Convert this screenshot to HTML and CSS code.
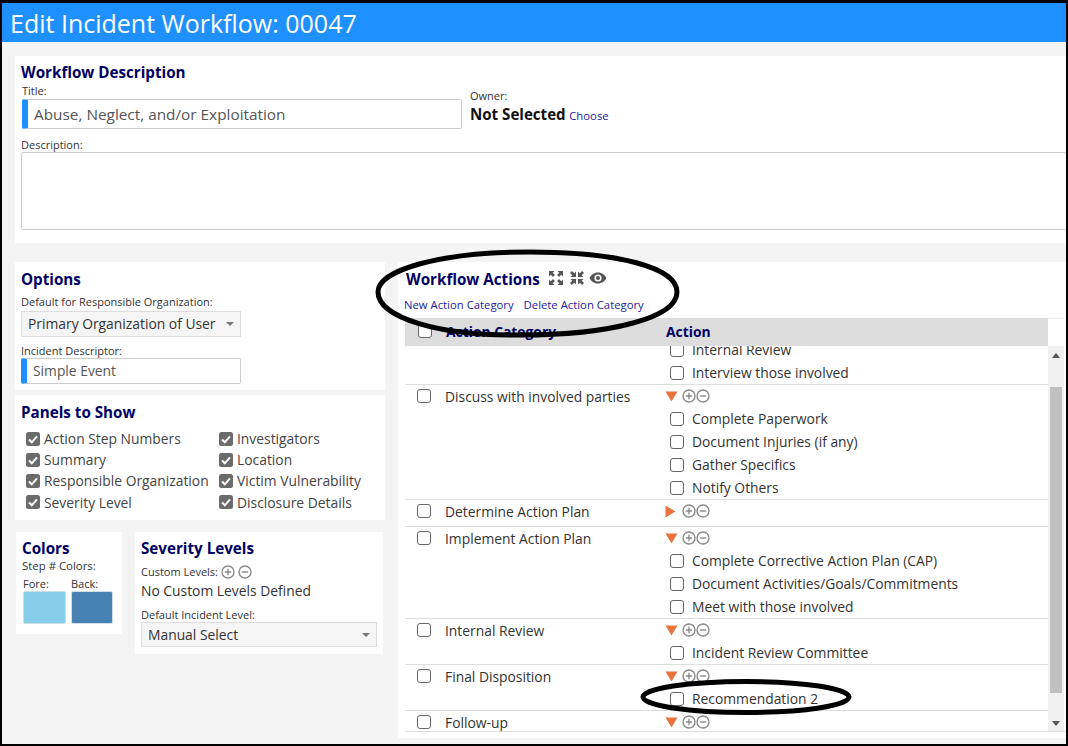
FILE: index.html
```html
<!DOCTYPE html>
<html>
    <head>
        <title>Edit Incident Workflow</title>
        <meta charset="UTF-8">
        <link rel="stylesheet" href="styles.css">
    </head>
    <body>
        <svg class="icon-defs" width="0" height="0">
            <symbol id="plus" viewBox="0 0 14 14"><circle cx="7" cy="7" r="6" fill="none" stroke="#8a8a8a" stroke-width="1.4"/><path d="M7 3.8v6.4M3.8 7h6.4" stroke="#8a8a8a" stroke-width="1.4"/></symbol>
            <symbol id="minus" viewBox="0 0 14 14"><circle cx="7" cy="7" r="6" fill="none" stroke="#8a8a8a" stroke-width="1.4"/><path d="M3.8 7h6.4" stroke="#8a8a8a" stroke-width="1.4"/></symbol>
            <symbol id="down" viewBox="0 0 13 11"><path d="M0.5 0.5h12l-6 10z" fill="#e8743b"/></symbol>
            <symbol id="right" viewBox="0 0 11 13"><path d="M0.5 0.5v12l10-6z" fill="#e8743b"/></symbol>
            <symbol id="tick" viewBox="0 0 14 14"><rect width="14" height="14" rx="2.5" fill="#6b6b6b"/><path d="M3 7.5l2.8 2.8L11 4.4" fill="none" stroke="#fff" stroke-width="2"/></symbol>
        </svg>
        <div class="frame">
            <div class="page-title">Edit Incident Workflow: 00047</div>
            <div class="main">
                <div class="panel desc-panel">
                    <h2>Workflow Description</h2>
                    <div class="desc-top">
                        <div class="title-group">
                            <div class="label">Title:</div>
                            <div class="input required title-input">Abuse, Neglect, and/or Exploitation</div>
                        </div>
                        <div class="owner-group">
                            <div class="label">Owner:</div>
                            <div class="owner-line"><b>Not Selected</b> <a class="link">Choose</a></div>
                        </div>
                    </div>
                    <div class="label desc-label">Description:</div>
                    <div class="textarea"></div>
                </div>
                <div class="columns">
                    <div class="left-col">
                        <div class="panel options-panel">
                            <h2>Options</h2>
                            <div class="label">Default for Responsible Organization:</div>
                            <div class="select org-select">Primary Organization of User<span class="caret"></span></div>
                            <div class="label descriptor-label">Incident Descriptor:</div>
                            <div class="input required descriptor-input">Simple Event</div>
                        </div>
                        <div class="panel show-panel">
                            <h2>Panels to Show</h2>
                            <div class="show-grid">
                                <div class="show-item"><svg><use href="#tick"/></svg>Action Step Numbers</div>
                                <div class="show-item"><svg><use href="#tick"/></svg>Investigators</div>
                                <div class="show-item"><svg><use href="#tick"/></svg>Summary</div>
                                <div class="show-item"><svg><use href="#tick"/></svg>Location</div>
                                <div class="show-item"><svg><use href="#tick"/></svg>Responsible Organization</div>
                                <div class="show-item"><svg><use href="#tick"/></svg>Victim Vulnerability</div>
                                <div class="show-item"><svg><use href="#tick"/></svg>Severity Level</div>
                                <div class="show-item"><svg><use href="#tick"/></svg>Disclosure Details</div>
                            </div>
                        </div>
                        <div class="bottom-row">
                            <div class="panel colors-panel">
                                <h2>Colors</h2>
                                <div class="label step-label">Step # Colors:</div>
                                <div class="swatches">
                                    <div class="swatch-col"><div class="label">Fore:</div><div class="swatch fore"></div></div>
                                    <div class="swatch-col"><div class="label">Back:</div><div class="swatch back"></div></div>
                                </div>
                            </div>
                            <div class="panel severity-panel">
                                <h2>Severity Levels</h2>
                                <div class="label custom-label">Custom Levels: <svg class="pm"><use href="#plus"/></svg> <svg class="pm"><use href="#minus"/></svg></div>
                                <div class="no-levels">No Custom Levels Defined</div>
                                <div class="label default-label">Default Incident Level:</div>
                                <div class="select level-select">Manual Select<span class="caret"></span></div>
                            </div>
                        </div>
                    </div>
                    <div class="panel actions-panel">
                        <div class="actions-head">
                            <h2>Workflow Actions</h2>
                            <svg class="tool" width="16" height="16" viewBox="0 0 16 16"><path d="M1 6.500V1H6.500L4.700 2.800 6.900 5 5 6.900 2.800 4.700zM9.500 1H15V6.500L13.200 4.700 11 6.900 9.100 5 11.300 2.800zM15 9.500V15H9.500L11.300 13.200 9.100 11 11 9.100 13.200 11.300zM6.500 15H1V9.500L2.800 11.300 5 9.100 6.900 11 4.700 13.200z" fill="#555"/></svg>
                            <svg class="tool" width="16" height="16" viewBox="0 0 16 16"><path d="M7 7H1.500L3.300 5.200 1 2.900 2.900 1 5.200 3.300 7 1.500zM9 7V1.500L10.800 3.300 13.100 1 15 2.900 12.700 5.200 14.500 7zM9 9H14.500L12.700 10.800 15 13.100 13.100 15 10.800 12.700 9 14.500zM7 9V14.500L5.200 12.700 2.900 15 1 13.100 3.300 10.800 1.500 9z" fill="#555"/></svg>
                            <svg class="tool eye" width="18" height="12" viewBox="0 0 18 12"><path d="M9 0.500C5 0.500 1.900 3 0.500 6c1.400 3 4.500 5.500 8.500 5.500s7.100-2.500 8.500-5.500C16.100 3 13 0.500 9 0.500zM9 9.600A3.600 3.600 0 1 1 9 2.400a3.600 3.600 0 0 1 0 7.200z" fill="#555"/><circle cx="9" cy="6" r="2" fill="#555"/></svg>
                        </div>
                        <div class="actions-links"><a class="link">New Action Category</a><a class="link">Delete Action Category</a></div>
                        <div class="table-head">
                            <div class="head-cells">
                                <span class="box"></span>
                                <span class="head-cat">Action Category</span>
                                <span class="head-action">Action</span>
                            </div>
                            <div class="head-corner"></div>
                        </div>
                        <div class="table-wrap">
                            <div class="table-body">
                                <div class="row scrolled">
                                    <div class="cat"></div>
                                    <div class="acts">
                                        <div class="item"><span class="box"></span>Internal Review</div>
                                        <div class="item"><span class="box"></span>Interview those involved</div>
                                    </div>
                                </div>
                                <div class="row">
                                    <div class="cat"><span class="box"></span>Discuss with involved parties</div>
                                    <div class="acts">
                                        <div class="tools"><svg class="arrow"><use href="#down"/></svg><svg class="pm"><use href="#plus"/></svg><svg class="pm"><use href="#minus"/></svg></div>
                                        <div class="item"><span class="box"></span>Complete Paperwork</div>
                                        <div class="item"><span class="box"></span>Document Injuries (if any)</div>
                                        <div class="item"><span class="box"></span>Gather Specifics</div>
                                        <div class="item"><span class="box"></span>Notify Others</div>
                                    </div>
                                </div>
                                <div class="row closed">
                                    <div class="cat"><span class="box"></span>Determine Action Plan</div>
                                    <div class="acts">
                                        <div class="tools"><svg class="arrow side"><use href="#right"/></svg><svg class="pm"><use href="#plus"/></svg><svg class="pm"><use href="#minus"/></svg></div>
                                    </div>
                                </div>
                                <div class="row">
                                    <div class="cat"><span class="box"></span>Implement Action Plan</div>
                                    <div class="acts">
                                        <div class="tools"><svg class="arrow"><use href="#down"/></svg><svg class="pm"><use href="#plus"/></svg><svg class="pm"><use href="#minus"/></svg></div>
                                        <div class="item"><span class="box"></span>Complete Corrective Action Plan (CAP)</div>
                                        <div class="item"><span class="box"></span>Document Activities/Goals/Commitments</div>
                                        <div class="item"><span class="box"></span>Meet with those involved</div>
                                    </div>
                                </div>
                                <div class="row">
                                    <div class="cat"><span class="box"></span>Internal Review</div>
                                    <div class="acts">
                                        <div class="tools"><svg class="arrow"><use href="#down"/></svg><svg class="pm"><use href="#plus"/></svg><svg class="pm"><use href="#minus"/></svg></div>
                                        <div class="item"><span class="box"></span>Incident Review Committee</div>
                                    </div>
                                </div>
                                <div class="row">
                                    <div class="cat"><span class="box"></span>Final Disposition</div>
                                    <div class="acts">
                                        <div class="tools"><svg class="arrow"><use href="#down"/></svg><svg class="pm"><use href="#plus"/></svg><svg class="pm"><use href="#minus"/></svg></div>
                                        <div class="item"><span class="box"></span>Recommendation 2</div>
                                    </div>
                                </div>
                                <div class="row">
                                    <div class="cat"><span class="box"></span>Follow-up</div>
                                    <div class="acts">
                                        <div class="tools"><svg class="arrow"><use href="#down"/></svg><svg class="pm"><use href="#plus"/></svg><svg class="pm"><use href="#minus"/></svg></div>
                                    </div>
                                </div>
                            </div>
                            <div class="scrollbar">
                                <div class="sb-btn"><span class="sb-up"></span></div>
                                <div class="sb-track"><div class="sb-thumb"></div></div>
                                <div class="sb-btn"><span class="sb-down"></span></div>
                            </div>
                        </div>
                    </div>
                </div>
            </div>
            <svg class="marks" width="1068" height="746" viewBox="0 0 1068 746">
                <path d="M378 292C378 270 440 252 530 252C620 252 677 268 677 292C677 318 610 335 520 335C440 336 378 318 378 292Z"/>
                <ellipse cx="746" cy="697" rx="103" ry="15.500"/>
            </svg>
        </div>
    </body>
</html>
```

FILE: styles.css
```css
*{
    box-sizing: border-box;
}

body{
    margin: 0;
    font-family: "Open Sans", "Noto Sans", sans-serif;
    font-size: 13.850px;
    color: #333;
}

.icon-defs{
    position: absolute;
}

.frame{
    position: relative;
    width: 1068px;
    height: 746px;
    overflow: hidden;
    background: #f4f4f4;
    border-style: solid;
    border-color: #000;
    border-width: 3px 2px 2px 2px;
}

.page-title{
    height: 39px;
    padding-left: 8px;
    background: #1e90ff;
    color: #fff;
    font-size: 25px;
    line-height: 41px;
}

.main{
    padding: 14px 0 0 13px;
}

.panel{
    background: #fff;
}

h2{
    margin: 0;
    font-size: 15.200px;
    line-height: 20px;
    font-weight: bold;
    color: #000066;
}

.label{
    font-size: 11px;
    line-height: 14px;
    color: #333;
}

.link{
    color: #2222a0;
    font-size: 11.300px;
}

.input{
    border: 1px solid #ccc;
    background: #fff;
    color: #555;
    padding-left: 6px;
}

.required{
    border-left: 6px solid #1e90ff;
    border-radius: 2px;
}

.select{
    position: relative;
    border: 1px solid #ddd;
    background: #f5f5f5;
    color: #333;
    padding-left: 6px;
}

.caret{
    position: absolute;
    right: 6px;
    top: 10px;
    border-style: solid;
    border-width: 4px 4px 0 4px;
    border-color: #777 transparent transparent transparent;
}

.box{
    display: inline-block;
    flex: none;
    width: 14px;
    height: 14px;
    border: 1px solid #666;
    border-radius: 3px;
    background: #fff;
}

/* description */
.desc-panel{
    width: 1051px;
    height: 187px;
    padding: 6px 0 0 6px;
    overflow: hidden;
}

.desc-top{
    display: flex;
    height: 54px;
    margin-top: 2px;
}

.title-group{
    width: 441px;
    padding-left: 1px;
}

.title-input{
    width: 440px;
    height: 30px;
    line-height: 29px;
    font-size: 15.350px;
    margin-top: 1px;
}

.owner-group{
    margin-left: 8px;
    padding-top: 5px;
}

.owner-line b{
    font-size: 15.100px;
    color: #111;
}

.owner-line{
    line-height: 22px;
}

.textarea{
    width: 1100px;
    height: 78px;
    border: 1px solid #ccc;
    border-radius: 2px;
    background: #fff;
}

/* columns */
.columns{
    display: flex;
    gap: 13px;
    margin-top: 19px;
}

.left-col{
    width: 370px;
    flex: none;
}

.options-panel{
    height: 128px;
    padding: 7px 0 0 6px;
}

.options-panel .label{
    margin-top: 6px;
}

.org-select{
    width: 220px;
    height: 26px;
    line-height: 23px;
    margin-top: 2px;
}

.options-panel .descriptor-label{
    margin-top: 7px;
}

.descriptor-input{
    width: 220px;
    height: 26px;
    line-height: 24px;
}

.show-panel{
    height: 125px;
    margin-top: 5px;
    padding: 7px 0 0 6px;
}

.show-grid{
    display: grid;
    grid-template-columns: 193px 1fr;
    grid-auto-rows: 21.200px;
    margin-top: 6px;
    padding-left: 5px;
}

.show-item{
    display: flex;
    align-items: center;
    gap: 4px;
    color: #444;
    white-space: nowrap;
}

.show-item svg{
    width: 14px;
    height: 14px;
    flex: none;
}

.bottom-row{
    display: flex;
    align-items: flex-start;
    margin-top: 12px;
    padding-left: 1px;
}

.colors-panel{
    width: 106px;
    height: 102px;
    padding: 6px 0 0 6px;
}

.step-label{
    font-size: 11.400px;
    line-height: 16px;
}

.swatches{
    display: flex;
    gap: 5px;
    margin-top: 3px;
    padding-left: 1px;
}

.swatch{
    width: 43px;
    height: 33px;
    border: 1px solid #cfdfe8;
    border-radius: 2px;
}

.back{
    width: 42px;
}

.fore{
    background: #87ceeb;
}

.back{
    background: #4682b4;
}

.severity-panel{
    width: 248px;
    height: 122px;
    margin-left: 13px;
    padding: 6px 0 0 6px;
}

.custom-label{
    display: flex;
    align-items: center;
    gap: 3px;
    height: 18px;
    margin-top: 5px;
}

.pm{
    width: 14px;
    height: 14px;
    flex: none;
}

.no-levels{
    line-height: 20px;
    white-space: nowrap;
}

.default-label{
    margin-top: 7px;
}

.level-select{
    width: 236px;
    height: 25px;
    line-height: 24px;
}

/* workflow actions */
.actions-panel{
    width: 668px;
    height: 476px;
    padding: 7px 0 0 6px;
}

.actions-head{
    display: flex;
    align-items: center;
    height: 20px;
    padding-left: 2px;
}

.tool{
    margin: -3px 0 0 5px;
}

.actions-head h2 + .tool{
    margin-left: 8px;
}

.eye{
    margin-left: 4px;
}

.actions-links{
    display: flex;
    gap: 10px;
    height: 29px;
    line-height: 32px;
    white-space: nowrap;
}

.table-head{
    display: flex;
    height: 28px;
    margin-left: 1px;
}

.head-cells{
    display: flex;
    align-items: center;
    width: 643px;
    padding: 0 0 2px 13px;
    background: #ddd;
    color: #000066;
    font-weight: bold;
}

.head-cat{
    width: 220px;
    margin-left: 14px;
}

.head-corner{
    width: 16px;
    border-top: 1px solid #eee;
}

.table-wrap{
    display: flex;
    height: 386px;
    margin-left: 1px;
    border-bottom: 1px solid #ddd;
}

.table-body{
    width: 643px;
    overflow: hidden;
}

.row{
    display: flex;
    border-bottom: 1px solid #ddd;
}

.scrolled{
    margin-top: -8px;
}

.closed{
    height: 27px;
}

.cat{
    display: flex;
    width: 248px;
    height: 22px;
    padding-left: 12px;
    gap: 14px;
    align-items: center;
    white-space: nowrap;
}

.acts{
    padding-left: 12px;
}

.tools{
    display: flex;
    align-items: center;
    height: 22px;
}

.arrow{
    width: 13px;
    height: 11px;
    flex: none;
    margin-right: 4px;
}

.side{
    width: 11px;
    height: 13px;
    margin-right: 6px;
}

.item{
    display: flex;
    align-items: center;
    gap: 8px;
    height: 23px;
    padding-left: 5px;
    white-space: nowrap;
    color: #333;
}

.scrollbar{
    display: flex;
    flex-direction: column;
    width: 16px;
    background: #f0f0f0;
}

.sb-btn{
    display: flex;
    align-items: center;
    justify-content: center;
    height: 18px;
    flex: none;
}

.sb-up{
    border-style: solid;
    border-width: 0 4px 5px 4px;
    border-color: transparent transparent #555 transparent;
}

.sb-down{
    border-style: solid;
    border-width: 5px 4px 0 4px;
    border-color: #555 transparent transparent transparent;
}

.sb-track{
    flex: 1;
    padding: 23px 2px 21px 2px;
}

.sb-thumb{
    height: 306px;
    background: #c0c0c0;
}

/* hand drawn circles over the screenshot */
.marks{
    position: absolute;
    left: -2px;
    top: -3px;
    fill: none;
    stroke: #000;
    stroke-width: 5px;
    pointer-events: none;
}
```
